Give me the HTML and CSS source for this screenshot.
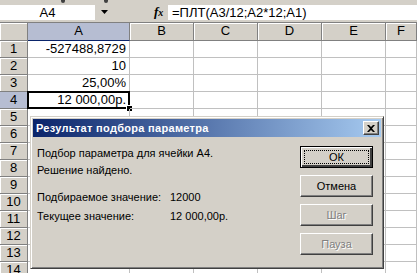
FILE: index.html
```html
<!DOCTYPE html>
<html>
<head>
  <meta charset="UTF-8">
  <title>Подбор параметра</title>
  <link rel="stylesheet" href="styles.css">
</head>
<body>

<div class="toolbar">
  <span class="grip g1"></span>
  <span class="grip g2"></span>
</div>

<div class="formula-bar">
  <div class="name-box">A4</div>
  <div class="name-drop">
    <svg width="7" height="4" viewBox="0 0 7 4"><path d="M0 0h7L3.5 4z" fill="#000"/></svg>
  </div>
  <div class="fx"><i>f</i><span>x</span></div>
  <div class="formula">=ПЛТ(A3/12;A2*12;A1)</div>
</div>

<div class="sheet">
  <div class="corner"></div>
  <div class="colhead sel">A</div>
  <div class="colhead">B</div>
  <div class="colhead">C</div>
  <div class="colhead">D</div>
  <div class="colhead">E</div>
  <div class="colhead">F</div>

  <div class="rowhead">1</div><div class="cell num">-527488,8729</div><div class="cell"></div><div class="cell"></div><div class="cell"></div><div class="cell"></div><div class="cell"></div>
  <div class="rowhead">2</div><div class="cell num">10</div><div class="cell"></div><div class="cell"></div><div class="cell"></div><div class="cell"></div><div class="cell"></div>
  <div class="rowhead">3</div><div class="cell num">25,00%</div><div class="cell"></div><div class="cell"></div><div class="cell"></div><div class="cell"></div><div class="cell"></div>
  <div class="rowhead sel">4</div><div class="cell num active">12 000,00р.<span class="handle"></span></div><div class="cell"></div><div class="cell"></div><div class="cell"></div><div class="cell"></div><div class="cell"></div>
  <div class="rowhead">5</div><div class="cell"></div><div class="cell"></div><div class="cell"></div><div class="cell"></div><div class="cell"></div><div class="cell"></div>
  <div class="rowhead">6</div><div class="cell"></div><div class="cell"></div><div class="cell"></div><div class="cell"></div><div class="cell"></div><div class="cell"></div>
  <div class="rowhead">7</div><div class="cell"></div><div class="cell"></div><div class="cell"></div><div class="cell"></div><div class="cell"></div><div class="cell"></div>
  <div class="rowhead">8</div><div class="cell"></div><div class="cell"></div><div class="cell"></div><div class="cell"></div><div class="cell"></div><div class="cell"></div>
  <div class="rowhead">9</div><div class="cell"></div><div class="cell"></div><div class="cell"></div><div class="cell"></div><div class="cell"></div><div class="cell"></div>
  <div class="rowhead">10</div><div class="cell"></div><div class="cell"></div><div class="cell"></div><div class="cell"></div><div class="cell"></div><div class="cell"></div>
  <div class="rowhead">11</div><div class="cell"></div><div class="cell"></div><div class="cell"></div><div class="cell"></div><div class="cell"></div><div class="cell"></div>
  <div class="rowhead">12</div><div class="cell"></div><div class="cell"></div><div class="cell"></div><div class="cell"></div><div class="cell"></div><div class="cell"></div>
  <div class="rowhead">13</div><div class="cell"></div><div class="cell"></div><div class="cell"></div><div class="cell"></div><div class="cell"></div><div class="cell"></div>
  <div class="rowhead">14</div><div class="cell"></div><div class="cell"></div><div class="cell"></div><div class="cell"></div><div class="cell"></div><div class="cell"></div>
</div>

<div class="dialog">
  <div class="titlebar">
    <span class="title">Результат подбора параметра</span>
    <span class="close">
      <svg width="8" height="7" viewBox="0 0 8 7"><path d="M0 0h2l2 2 2-2h2L5 3.5 8 7H6L4 5 2 7H0l3-3.5z" fill="#000"/></svg>
    </span>
  </div>
  <div class="dlg-body">
    <div class="messages">
      <div class="line">Подбор параметра для ячейки A4.</div>
      <div class="line">Решение найдено.</div>
      <div class="pair first"><span class="key">Подбираемое значение:</span><span>12000</span></div>
      <div class="pair"><span class="key">Текущее значение:</span><span>12 000,00р.</span></div>
    </div>
    <div class="buttons">
      <button class="btn default"><span class="focus">ОК</span></button>
      <button class="btn">Отмена</button>
      <button class="btn off">Шаг</button>
      <button class="btn off">Пауза</button>
    </div>
  </div>
</div>

</body>
</html>
```

FILE: styles.css
```css
body {
  margin: 0;
  padding: 0;
  background: white;
  font-family: "Liberation Sans", Arial, sans-serif;
  color: black;
  width: 417px;
  height: 273px;
  overflow: hidden;
  position: relative;
}

.toolbar {
  height: 4px;
  background: #d4d0c8;
  position: relative;
}
.grip {
  position: absolute;
  top: 0;
  width: 4px;
  height: 3px;
  background: #404040;
  border-radius: 0 0 2px 2px;
}
.g1 { left: 61px; }
.g2 { left: 104px; }

.formula-bar {
  display: flex;
  align-items: center;
  height: 18px;
  background: #d4d0c8;
  border-bottom: 1px solid #808080;
}
.name-box {
  width: 95px;
  height: 15px;
  background: white;
  font-size: 13px;
  line-height: 15px;
  text-align: center;
  margin-top: -2px;
}
.name-drop {
  width: 18px;
  display: flex;
  justify-content: center;
  margin-top: -2px;
}
.fx {
  margin-left: 41px;
  width: 14px;
  font-family: "Liberation Serif", serif;
  font-weight: bold;
  font-size: 13px;
  margin-top: -2px;
}
.fx span {
  font-size: 10px;
  font-style: italic;
}
.formula {
  flex: 1;
  height: 15px;
  background: white;
  font-size: 13px;
  line-height: 15px;
  padding-left: 4px;
  margin-top: -2px;
}

.sheet {
  display: grid;
  grid-template-columns: 28px 102px 64px 64px 64px 64px 1fr;
  grid-template-rows: 18px;
  grid-auto-rows: 17px;
}
.corner, .colhead, .rowhead {
  background: #d4d0c8;
  box-sizing: border-box;
  border-right: 1px solid #808080;
  border-bottom: 1px solid #808080;
  box-shadow: inset 1px 1px 0 white;
  font-size: 13px;
  text-align: center;
  line-height: 16px;
}
.colhead.sel, .rowhead.sel {
  background: #b6bdd2;
  box-shadow: none;
}
.colhead.sel {
  border-bottom-color: #0a246a;
}
.rowhead.sel {
  border-right-color: #0a246a;
}
.cell {
  box-sizing: border-box;
  border-right: 1px solid #c0c0c0;
  border-bottom: 1px solid #c0c0c0;
  font-size: 13px;
  line-height: 16px;
  position: relative;
}
.cell.num {
  text-align: right;
  padding-right: 3px;
}
.cell.active {
  border: 2px solid black;
  margin: -1px 0 0 -1px;
  line-height: 14px;
  padding-right: 2px;
}
.handle {
  position: absolute;
  right: -4px;
  bottom: -4px;
  width: 5px;
  height: 5px;
  background: black;
  border: 1px solid white;
  border-width: 1px 0 0 1px;
}

.dialog {
  position: absolute;
  left: 30px;
  top: 116px;
  width: 354px;
  height: 153px;
  box-sizing: border-box;
  background: #d4d0c8;
  border: 1px solid;
  border-color: #d4d0c8 #404040 #404040 #d4d0c8;
  box-shadow: inset 1px 1px 0 white, inset -1px -1px 0 #808080;
  padding: 2px;
  font-size: 11px;
  white-space: nowrap;
}
.titlebar {
  height: 18px;
  display: flex;
  align-items: center;
  justify-content: space-between;
  background: linear-gradient(to right, #0a246a, #a6caf0);
  padding: 0 2px 0 3px;
}
.title {
  color: white;
  font-weight: bold;
  font-size: 11px;
  letter-spacing: 0.3px;
}
.close {
  width: 16px;
  height: 14px;
  box-sizing: border-box;
  background: #d4d0c8;
  border: 1px solid;
  border-color: white #404040 #404040 white;
  box-shadow: inset -1px -1px 0 #808080;
  display: flex;
  align-items: center;
  justify-content: center;
}

.dlg-body {
  display: flex;
  justify-content: space-between;
  padding: 0 8px 0 4px;
}
.messages {
  padding-top: 8px;
}
.line {
  height: 17px;
  line-height: 17px;
}
.pair {
  display: flex;
  height: 19px;
  line-height: 19px;
}
.pair.first {
  margin-top: 9px;
}
.key {
  width: 133px;
  flex-shrink: 0;
}
.buttons {
  display: flex;
  flex-direction: column;
  gap: 7px;
  padding-top: 9px;
}
.btn {
  width: 73px;
  height: 22px;
  box-sizing: border-box;
  background: #d4d0c8;
  border: 1px solid;
  border-color: white #404040 #404040 white;
  box-shadow: inset -1px -1px 0 #808080;
  font-family: "Liberation Sans", Arial, sans-serif;
  font-size: 11px;
  color: black;
  padding: 0;
}
.btn.default {
  border: 1px solid black;
  box-shadow: inset 1px 1px 0 white, inset -2px -2px 0 #404040, inset -1px -1px 0 #808080;
  padding: 3px;
}
.focus {
  display: block;
  height: 100%;
  box-sizing: border-box;
  border: 1px dotted black;
  line-height: 12px;
}
.btn.off {
  color: #808080;
  text-shadow: 1px 1px 0 white;
}
```
